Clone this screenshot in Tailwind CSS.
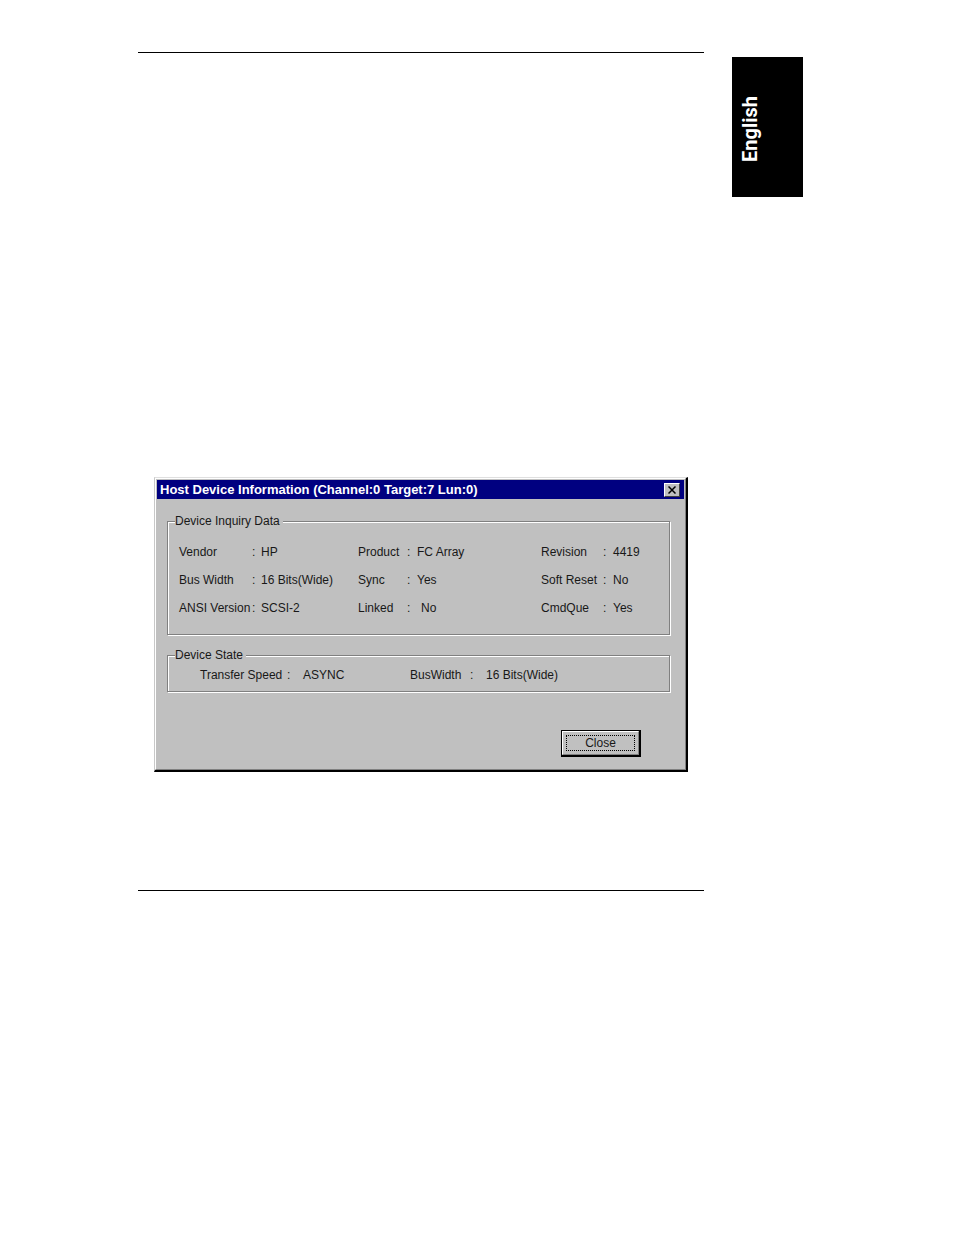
<!DOCTYPE html>
<html lang="en">
<head>
<meta charset="utf-8">
<meta name="viewport" content="width=device-width, initial-scale=1">
<title>Host Device Information</title>
<script src="https://cdn.jsdelivr.net/npm/@tailwindcss/browser@4"></script>
</head>
<body class="bg-white text-black font-['Liberation_Sans',Arial,sans-serif]">
<div class="flex items-start pt-[52px] pb-16 pl-[138px] pr-[151px]">
  <main class="min-w-0 flex-1 border-y border-black px-4 pt-[424px] pb-[118px]">
    <section role="dialog" aria-labelledby="title" class="border-t border-l border-r-2 border-b-2 border-t-[#dfdfdf] border-l-[#c8c8c8] border-r-black border-b-black bg-[#c0c0c0] text-xs text-[#181818]">
      <div class="border border-t-white border-l-white border-r-[#808080] border-b-[#808080] p-px pb-3">
        <header class="flex h-[19px] items-center justify-between bg-[#000080] pr-1 pl-[3px]">
          <h1 id="title" class="text-[13px] leading-4 font-bold whitespace-nowrap text-white">Host Device Information (Channel:0 Target:7 Lun:0)</h1>
          <button type="button" aria-label="Close window" class="flex h-[14px] w-4 items-center justify-center border border-t-white border-l-white border-r-[#404040] border-b-[#404040] bg-[#c0c0c0] text-black">
            <svg width="8" height="8" viewBox="0 0 8 8" stroke="currentColor" stroke-width="1.5" aria-hidden="true"><path d="M0.5 0.5 7.5 7.5M7.5 0.5 0.5 7.5"/></svg>
          </button>
        </header>
        <div class="pt-[14px] pr-[14px] pl-[10px]">
          <fieldset class="border border-[#808080] px-[11px] pb-3 shadow-[1px_1px_0_white,inset_1px_1px_0_white]">
            <legend class="-ml-1 bg-[#c0c0c0] pr-[3px] leading-4">Device Inquiry Data</legend>
            <dl class="grid auto-rows-[28px] grid-cols-[73px_9px_97px_49px_10px_minmax(80px,1fr)_62px_10px_45px] items-center pt-[9px] whitespace-nowrap">
              <dt>Vendor</dt><dd>:</dd><dd>HP</dd>
              <dt>Product</dt><dd>:</dd><dd>FC Array</dd>
              <dt>Revision</dt><dd>:</dd><dd>4419</dd>
              <dt>Bus Width</dt><dd>:</dd><dd>16 Bits(Wide)</dd>
              <dt>Sync</dt><dd>:</dd><dd>Yes</dd>
              <dt>Soft Reset</dt><dd>:</dd><dd>No</dd>
              <dt>ANSI Version</dt><dd>:</dd><dd>SCSI-2</dd>
              <dt>Linked</dt><dd>:</dd><dd class="pl-1">No</dd>
              <dt>CmdQue</dt><dd>:</dd><dd>Yes</dd>
            </dl>
          </fieldset>
          <fieldset class="mt-3 border border-[#808080] px-[11px] pb-2 shadow-[1px_1px_0_white,inset_1px_1px_0_white]">
            <legend class="-ml-1 bg-[#c0c0c0] pr-[3px] leading-4">Device State</legend>
            <dl class="grid grid-cols-[87px_16px_107px_60px_16px_1fr] pt-1 pl-[21px] leading-4 whitespace-nowrap">
              <dt>Transfer Speed</dt><dd>:</dd><dd>ASYNC</dd>
              <dt>BusWidth</dt><dd>:</dd><dd>16 Bits(Wide)</dd>
            </dl>
          </fieldset>
          <div class="flex justify-end pt-[38px] pr-[29px]">
            <button type="button" class="border border-r-2 border-b-2 border-black bg-[#c0c0c0] text-xs">
              <span class="block border border-t-white border-l-white border-r-[#808080] border-b-[#808080] p-[3px]">
                <span class="block w-[69px] border border-dotted border-black leading-[14px]">Close</span>
              </span>
            </button>
          </div>
        </div>
      </div>
    </section>
  </main>
  <aside class="mt-[5px] ml-7 flex h-[140px] w-[71px] shrink-0 items-center bg-black pt-1 pl-1 text-white">
    <p class="rotate-180 font-['Roboto',sans-serif] text-[20px] leading-7 font-bold [writing-mode:vertical-rl]">English</p>
  </aside>
</div>
</body>
</html>
